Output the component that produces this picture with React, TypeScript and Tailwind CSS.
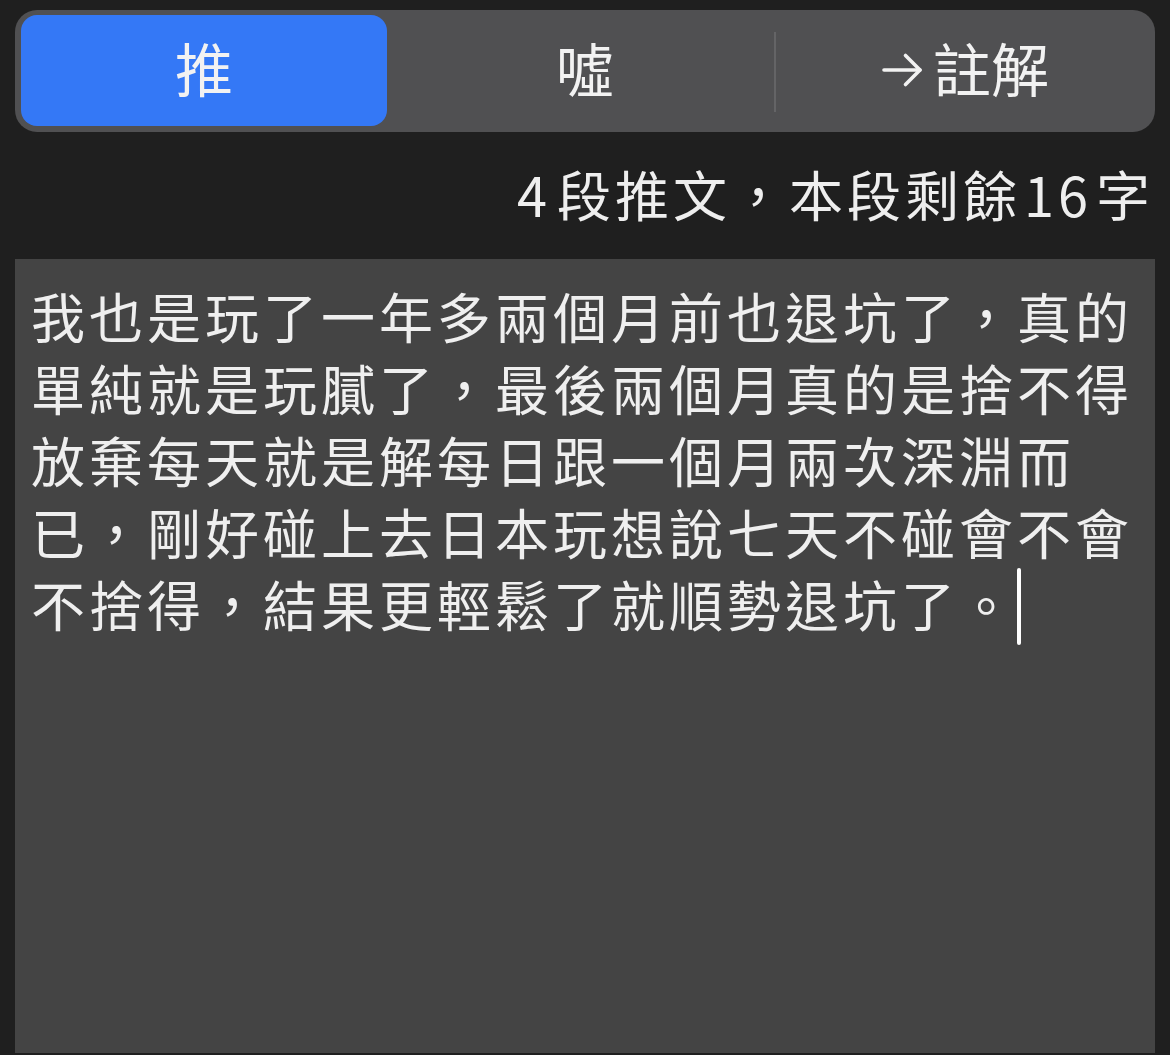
import React from 'react';

const FONT = { fontFamily: '"Noto Sans CJK TC", "Noto Sans", sans-serif' };

function Arrow() {
  return (
    <svg width="42" height="36" viewBox="0 0 42 36" className="mr-[10px] mt-[6px]" fill="none">
      <path d="M3 18H39" stroke="#f2f2f2" strokeWidth="3.6" strokeLinecap="round" />
      <path d="M24.5 3.5L39 18L24.5 32.5" stroke="#f2f2f2" strokeWidth="3.6" strokeLinecap="round" strokeLinejoin="round" />
    </svg>
  );
}

const segments = ['推', '噓', '註解'];

export default function App() {
  const active = 0;
  const body =
    '我也是玩了一年多兩個月前也退坑了，真的單純就是玩膩了，最後兩個月真的是捨不得放棄每天就是解每日跟一個月兩次深淵而已，剛好碰上去日本玩想說七天不碰會不會不捨得，結果更輕鬆了就順勢退坑了。';

  return (
    <div className="min-h-screen bg-[#1f1f1f] px-[15px] pt-[10px]" style={FONT}>
      {/* Segmented control */}
      <div className="grid h-[122px] grid-cols-3 rounded-[22px] bg-[#505052]">
        {segments.map((label, i) => (
          <div key={label} className="relative flex items-center">
            {i === active ? (
              <div className="ml-[6px] mr-[8px] -mt-[1px] flex h-[111px] flex-1 items-center justify-center rounded-[16px] bg-[#3478f6] pb-[7px]">
                <span className="text-[58px] leading-none text-[#f2f2f2]">{label}</span>
              </div>
            ) : (
              <div className="flex flex-1 items-center justify-center pb-[8px]">
                {i === 2 && <Arrow />}
                <span className="text-[58px] leading-none text-[#f2f2f2]">{label}</span>
              </div>
            )}
            {i === 1 && (
              <div className="absolute right-[-1px] top-[22px] h-[80px] w-[2px] bg-[#646466]" />
            )}
          </div>
        ))}
      </div>

      {/* Counter */}
      <div className="mt-[26px] h-[72px] pr-[1px] text-right text-[54px] leading-[72px] tracking-[4px] text-[#eeeeee]">
        <span className="mr-[6px]">4</span>段推文，本段剩餘<span className="ml-[3px] mr-[4px]">16</span>字
      </div>

      {/* Text area */}
      <div className="mt-[29px] h-[794px] bg-[#444444] pl-[16px] pr-[16px] pt-[21px]">
        <p className="text-[54px] leading-[72px] tracking-[4px] text-[#efefef]">
          {body}
          <span className="inline-block h-[77px] w-[4px] -mb-[5px] rounded-full bg-white align-top" />
        </p>
      </div>
    </div>
  );
}
